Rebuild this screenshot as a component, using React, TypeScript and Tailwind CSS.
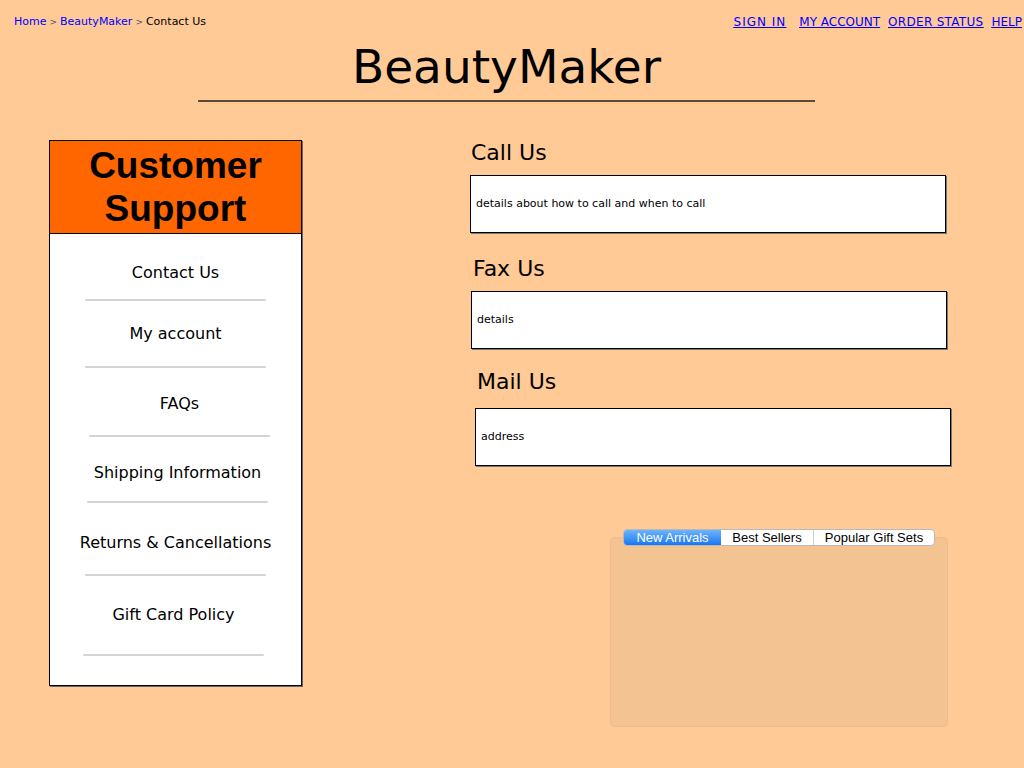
import React from "react";

const sketch = { fontFamily: '"Comic Sans MS", "DejaVu Sans", sans-serif' };
const helv = { fontFamily: '"Liberation Sans", Arial, sans-serif' };

type MenuItem = { label: string; box: string };

const menu: MenuItem[] = [
    { label: "Contact Us", box: "h-[67px] pt-[29px]" },
    { label: "My account", box: "h-[67px] pt-[23px]" },
    { label: "FAQs", box: "h-[69px] pt-[26px] pl-[8px]" },
    { label: "Shipping Information", box: "h-[66px] pt-[26px] pl-[4px]" },
    { label: "Returns & Cancellations", box: "h-[73px] pt-[30px]" },
    { label: "Gift Card Policy", box: "h-[80px] pt-[29px] pr-[4px]" },
];

const contacts = [
    { title: "Call Us", text: "details about how to call and when to call", wrap: "ml-0", head: "ml-[1px] h-[37px]", gap: "mb-[21px]" },
    { title: "Fax Us", text: "details", wrap: "ml-[1px]", head: "ml-[3px] h-[37px]", gap: "mb-[18px]" },
    { title: "Mail Us", text: "address", wrap: "ml-[5px]", head: "ml-[7px] h-[41px]", gap: "mb-0" },
];

function SideMenu() {
    return (
        <div className="w-[253px] h-[546px] border border-black bg-white shadow-[1px_1px_0_#666] flex flex-col">
            <div className="h-[93px] bg-[#ff6600] border-b border-black flex flex-col items-center justify-center text-black font-bold text-[37px] leading-[43px]" style={helv}>
                <span>Customer</span>
                <span>Support</span>
            </div>
            {menu.map((m) => (
                <div key={m.label} className={`${m.box} flex flex-col items-center`}>
                    <div className="flex-1 text-[16px] leading-[20px] text-black" style={sketch}>{m.label}</div>
                    <div className="w-[181px] h-[2px] bg-[#d4d4d4] rounded-full" />
                </div>
            ))}
        </div>
    );
}

function TabPanel() {
    return (
        <div className="ml-[140px] mt-[63px] w-[338px]">
            <div className="ml-[13px] flex w-[312px] h-[17px] rounded-[4px] border border-[#b9b9b9] bg-white overflow-hidden text-[13px] leading-[15px] text-black relative z-10" style={helv}>
                <div className="w-[97px] flex items-center justify-center text-white bg-gradient-to-b from-[#6cb3fa] to-[#1677f2]">New Arrivals</div>
                <div className="w-[93px] flex items-center justify-center border-r border-[#d0d0d0]">Best Sellers</div>
                <div className="flex-1 flex items-center justify-center">Popular Gift Sets</div>
            </div>
            <div className="-mt-[9px] h-[190px] rounded-[4px] bg-[#f4c392] border border-[#efbd8c]" />
        </div>
    );
}

export default function App() {
    return (
        <div className="w-[1024px] h-[768px] bg-[#ffca96] overflow-hidden relative" style={sketch}>
            <div className="flex justify-between items-center pt-[14px] pl-[14px] pr-[2px] h-[30px] text-[12px] leading-[16px]">
                <div className="flex items-center gap-[3px] text-[11px]">
                    <a className="text-[#0000ff]">Home</a>
                    <span className="text-[#555] text-[9px]">&gt;</span>
                    <a className="text-[#0000ff]">BeautyMaker</a>
                    <span className="text-[#555] text-[9px]">&gt;</span>
                    <span className="text-black">Contact Us</span>
                </div>
                <div className="flex items-center gap-[8px] text-[#0000ff] underline">
                    <a className="mr-[5px] tracking-[1px]">SIGN IN</a>
                    <a>MY ACCOUNT</a>
                    <a className="tracking-[0.3px]">ORDER STATUS</a>
                    <a>HELP</a>
                </div>
            </div>
            <div className="ml-[198px] w-[617px] flex flex-col items-center">
                <div className="h-[70px] flex items-center text-[47px] leading-[56px] text-black pt-[4px]">BeautyMaker</div>
                <div className="w-full h-[2px] bg-[#5a4a3a]" />
            </div>
            <div className="flex mt-[38px]">
                <div className="ml-[49px]">
                    <SideMenu />
                </div>
                <div className="ml-[168px] flex flex-col -mt-[2px]">
                    {contacts.map((c) => (
                        <div key={c.title} className={`${c.gap} flex flex-col`}>
                            <div className={`${c.head} text-[22px] leading-[30px] text-black`}>{c.title}</div>
                            <div className={`${c.wrap} w-[476px] h-[58px] bg-white border border-black shadow-[1px_1px_0_#777] flex items-center px-[5px] text-[11px] text-black`}>
                                {c.text}
                            </div>
                        </div>
                    ))}
                    <TabPanel />
                </div>
            </div>
        </div>
    );
}
